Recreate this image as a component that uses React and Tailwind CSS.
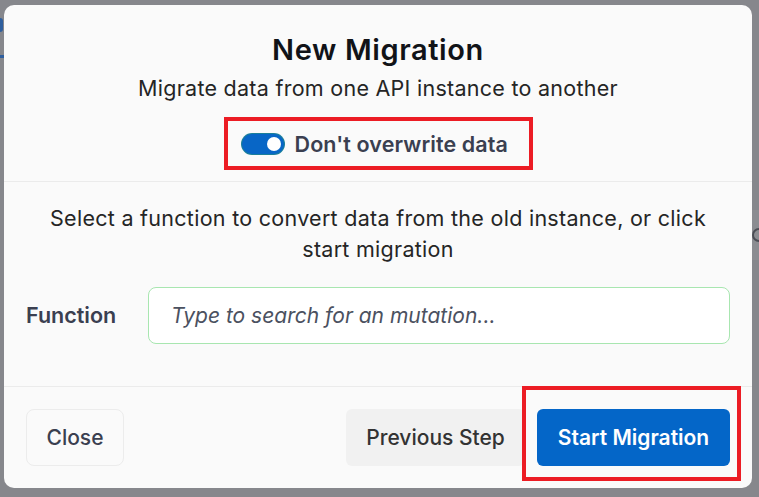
export default function App() {
  return (
    <div
      className="relative w-[759px] h-[497px] overflow-hidden bg-[#86878c] pt-[5px] pl-[4px]"
      style={{ fontFamily: "Inter, 'Noto Sans', sans-serif" }}
    >
      {/* faint background content peeking out */}
      <div className="absolute left-0 top-[18px] w-[3px] h-[14px] rounded-r bg-[#2f5f9e]" />
      <div className="absolute left-0 top-[55px] w-[4px] h-[3px] bg-[#2f5f9e]" />
      <div className="absolute right-0 top-[210px] w-[7px] h-[50px] bg-[#8b8c91]" />
      <div className="absolute left-[752px] top-[228px] w-[14px] h-[14px] rounded-full border-2 border-[#4b4d55]" />

      <div className="relative w-[748px] h-[483px] rounded-[10px] bg-[#fafafa] flex flex-col">
        {/* header */}
        <div className="flex flex-col items-center pt-[27px] pb-[11px] border-b border-[#ebebeb]">
          <h1 className="text-[29px] leading-[36px] font-semibold text-[#111318] tracking-[0.6px]">
            New Migration
          </h1>
          <p className="mt-[6px] text-[21.5px] leading-[28px] text-[#252525] tracking-[0.27px]">
            Migrate data from one API instance to another
          </p>
          <div className="mt-[15px] h-[53px] w-[309px] border-[4px] border-[#ec1c24] flex items-center pl-[14px] gap-[11px]">
            <div className="relative w-[42px] h-[20px] rounded-full bg-[#0866c6] ring-1 ring-[#1a7f9a]">
              <div className="absolute right-[3px] top-[3px] w-[14px] h-[14px] rounded-full bg-white" />
            </div>
            <span className="text-[21.5px] leading-[26px] font-semibold text-[#3a3f50] tracking-[0.1px]">
              Don't overwrite data
            </span>
          </div>
        </div>

        {/* body */}
        <div className="flex flex-col px-[22px] pt-[21px] pb-[42px] border-b border-[#ebebeb]">
          <p className="text-center text-[21.5px] leading-[31px] text-[#252525] tracking-[0.28px]">
            Select a function to convert data from the old instance, or click start migration
          </p>
          <div className="mt-[22px] flex items-center">
            <label className="w-[122px] text-[21.5px] font-semibold text-[#3a3f50]">
              Function
            </label>
            <input
              className="flex-1 h-[57px] rounded-[8px] border border-[#a8e6b0] bg-white px-[22px] text-[21px] italic text-[#4b5160] placeholder:text-[#4b5160] outline-none"
              placeholder="Type to search for an mutation..."
            />
          </div>
        </div>

        {/* footer */}
        <div className="flex items-center px-[22px] pt-[22px]">
          <button className="h-[57px] w-[98px] rounded-[8px] border border-[#ececec] text-[21px] font-medium text-[#3a3f50]">
            Close
          </button>
          <div className="ml-auto flex items-center gap-[12px]">
            <button className="h-[57px] w-[179px] rounded-[6px] bg-[#f1f1f1] text-[21px] font-medium text-[#333]">
              Previous Step
            </button>
            <div className="relative">
              <div className="absolute left-[-15px] right-[-11px] top-[-23px] bottom-[-15px] border-[4px] border-[#ec1c24]" />
              <button className="relative h-[57px] w-[193px] rounded-[6px] bg-[#0466c8] text-[21px] font-semibold text-white">
                Start Migration
              </button>
            </div>
          </div>
        </div>
      </div>
    </div>
  );
}
